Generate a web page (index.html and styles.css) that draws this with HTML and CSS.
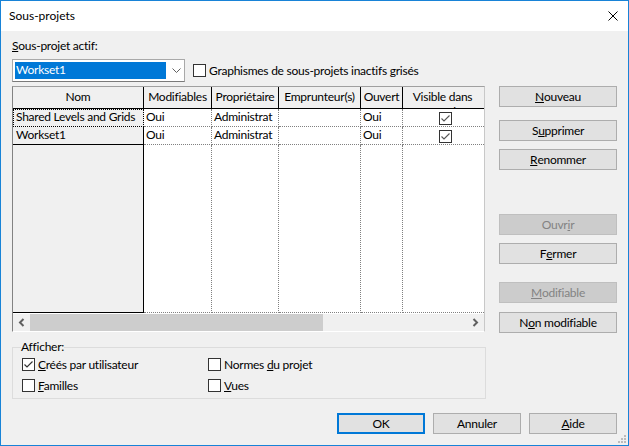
FILE: index.html
```html
<!DOCTYPE html>
<html lang="fr">
<head>
<meta charset="utf-8">
<title>Sous-projets</title>
<link rel="stylesheet" href="styles.css">
</head>
<body>
<div class="window">
  <div class="titlebar">
    <span class="title">Sous-projets</span>
    <svg class="close" width="10" height="10" viewBox="0 0 10 10"><path d="M0.5 0.5 L9.5 9.5 M9.5 0.5 L0.5 9.5" stroke="#000" stroke-width="1" fill="none"/></svg>
  </div>
  <div class="body">
    <div class="label"><u>S</u>ous-projet actif:</div>
    <div class="toprow">
      <div class="combo">
        <span class="combo-sel">Workset1</span>
        <svg class="chev" width="9" height="5" viewBox="0 0 9 5"><path d="M0.5 0.5 L4.5 4.5 L8.5 0.5" stroke="#606060" fill="none"/></svg>
      </div>
      <div class="chk top-chk"><span class="box"></span><span>Graphismes de sous-projets inactifs <u>g</u>risés</span></div>
    </div>
    <div class="main">
      <div class="grid">
        <div class="hrow">
          <div class="hc w-nom">Nom</div>
          <div class="hc w-mod">Modifiables</div>
          <div class="hc w-prop">Propriétaire</div>
          <div class="hc w-emp">Emprunteur(s)</div>
          <div class="hc w-ouv">Ouvert</div>
          <div class="hc w-vis last">Visible dans toutes les vues</div>
        </div>
        <div class="row">
          <div class="nc w-nom focus">Shared Levels and Grids</div>
          <div class="dc w-mod">Oui</div>
          <div class="dc w-prop">Administrat</div>
          <div class="dc w-emp"></div>
          <div class="dc w-ouv">Oui</div>
          <div class="dc w-vis last vis"><span class="box small checked"><svg width="11" height="11" viewBox="0 0 11 11"><path d="M1.5 5.5 L4 8 L9.5 2.5" stroke="#555" stroke-width="1.1" fill="none"/></svg></span></div>
        </div>
        <div class="row">
          <div class="nc w-nom">Workset1</div>
          <div class="dc w-mod">Oui</div>
          <div class="dc w-prop">Administrat</div>
          <div class="dc w-emp"></div>
          <div class="dc w-ouv">Oui</div>
          <div class="dc w-vis last vis"><span class="box small checked"><svg width="11" height="11" viewBox="0 0 11 11"><path d="M1.5 5.5 L4 8 L9.5 2.5" stroke="#555" stroke-width="1.1" fill="none"/></svg></span></div>
        </div>
        <div class="row filler">
          <div class="nc w-nom"></div>
          <div class="dc w-mod"></div>
          <div class="dc w-prop"></div>
          <div class="dc w-emp"></div>
          <div class="dc w-ouv"></div>
          <div class="dc w-vis last"></div>
        </div>
        <div class="gap"></div>
        <div class="hscroll">
          <div class="sbtn"><svg width="17" height="17" viewBox="0 0 17 17"><path d="M10.5 5 L7 8.5 L10.5 12" stroke="#606060" stroke-width="2" fill="none"/></svg></div>
          <div class="thumb"></div>
          <div class="track"></div>
          <div class="sbtn"><svg width="17" height="17" viewBox="0 0 17 17"><path d="M6.5 5 L10 8.5 L6.5 12" stroke="#606060" stroke-width="2" fill="none"/></svg></div>
        </div>
      </div>
      <div class="side">
        <div class="btn b1"><u>N</u>ouveau</div>
        <div class="btn b2">S<u>u</u>pprimer</div>
        <div class="btn b3"><u>R</u>enommer</div>
        <div class="btn b4 disabled">Ouvr<u>i</u>r</div>
        <div class="btn b5">F<u>e</u>rmer</div>
        <div class="btn b6 disabled"><u>M</u>odifiable</div>
        <div class="btn b7">N<u>o</u>n modifiable</div>
      </div>
    </div>
    <fieldset class="group">
      <legend>Afficher:</legend>
      <div class="opts">
        <div class="chk"><span class="box checked"><svg width="11" height="11" viewBox="0 0 11 11"><path d="M1.5 5.5 L4 8 L9.5 2.5" stroke="#333" stroke-width="1.2" fill="none"/></svg></span><span><u>C</u>réés par utilisateur</span></div>
        <div class="chk"><span class="box"></span><span>Normes <u>d</u>u projet</span></div>
        <div class="chk"><span class="box"></span><span><u>F</u>amilles</span></div>
        <div class="chk"><span class="box"></span><span><u>V</u>ues</span></div>
      </div>
    </fieldset>
    <div class="footer">
      <div class="btn fbtn default">OK</div>
      <div class="btn fbtn">Annuler</div>
      <div class="btn fbtn"><u>A</u>ide</div>
    </div>
  </div>
  <svg class="grip" width="10" height="10" viewBox="0 0 10 10">
    <rect x="7" y="1" width="2" height="2" fill="#bcbcbc"/>
    <rect x="4" y="4" width="2" height="2" fill="#bcbcbc"/>
    <rect x="7" y="4" width="2" height="2" fill="#bcbcbc"/>
    <rect x="1" y="7" width="2" height="2" fill="#bcbcbc"/>
    <rect x="4" y="7" width="2" height="2" fill="#bcbcbc"/>
    <rect x="7" y="7" width="2" height="2" fill="#bcbcbc"/>
  </svg>
</div>
</body>
</html>
```

FILE: styles.css
```css
* { box-sizing: border-box; }
html, body { margin: 0; padding: 0; }
body {
  font-family: Lato, "Noto Sans", sans-serif;
  font-size: 12px;
  letter-spacing: -0.25px;
  color: #000;
  background: #fff;
}
u { text-decoration: underline; text-underline-offset: 1px; }

.window {
  width: 629px;
  height: 446px;
  border: 1px solid #1883d7;
  background: #f0f0f0;
  display: flex;
  flex-direction: column;
  position: relative;
  overflow: hidden;
}

.titlebar {
  flex: none;
  height: 30px;
  background: #fff;
  display: flex;
  align-items: center;
  justify-content: space-between;
  padding: 0 10px 0 8px;
}
.title { line-height: 16px; letter-spacing: 0; }
.close { display: block; }

.body {
  flex: 1;
  display: flex;
  flex-direction: column;
  padding: 0 11px;
}

.label { margin-top: 7px; line-height: 16px; height: 16px; }

.toprow {
  margin-top: 5px;
  height: 23px;
  display: flex;
  align-items: center;
}
.combo {
  width: 173px;
  height: 23px;
  border: 1px solid #a9a9a9;
  border-bottom-color: #7a7a7a;
  background: #fff;
  display: flex;
  align-items: center;
  padding-left: 2px;
}
.combo-sel {
  width: 151px;
  height: 17px;
  line-height: 16px;
  background: #0078d7;
  color: #fff;
  padding-left: 1px;
}
.chev { margin-left: 6px; display: block; }

.chk { display: flex; align-items: center; gap: 3px; line-height: 13px; white-space: nowrap; }
.top-chk { margin-left: 8px; }
.box {
  width: 13px;
  height: 13px;
  border: 1px solid #333;
  background: #fff;
  flex: none;
  display: flex;
  align-items: center;
  justify-content: center;
}
.box svg { display: block; }
.box.small { border-color: #333; }

.main {
  margin-top: 4px;
  display: flex;
  gap: 14px;
}

.grid {
  width: 473px;
  height: 246px;
  border-left: 1px solid #828282;
  border-top: 1px solid #a0a0a0;
  border-right: 1px solid #c8c8c8;
  border-bottom: 1px solid #fff;
  background: #fff;
  display: flex;
  flex-direction: column;
  overflow: hidden;
}

.w-nom { width: 131px; flex: none; }
.w-mod { width: 68px; flex: none; }
.w-prop { width: 67px; flex: none; }
.w-emp { width: 82px; flex: none; }
.w-ouv { width: 42px; flex: none; }
.w-vis { flex: 1; }

.hrow {
  display: flex;
  height: 22px;
  flex: none;
  background: #f0f0f0;
  border-bottom: 1px solid #000;
}
.hc {
  border-right: 1px solid #000;
  text-align: center;
  padding-top: 2px;
  line-height: 15px;
  overflow: hidden;
  white-space: nowrap;
}
.hc.last { white-space: normal; border-right: none; padding: 2px 8px 0 6px; }

.row { display: flex; height: 18px; flex: none; }
.row.filler { height: 168px; }
.nc {
  background: #f0f0f0;
  border-right: 1px solid #000;
  border-bottom: 1px solid #000;
  padding-left: 3px;
  line-height: 16px;
  white-space: nowrap;
  overflow: hidden;
}
.nc.focus {
  border-right-color: transparent;
  border-bottom-color: transparent;
  outline: 1px dotted #000;
  outline-offset: -1px;
}
.dc {
  background: #fff;
  border-right: 1px dotted #808080;
  border-bottom: 1px dotted #808080;
  padding-left: 2px;
  line-height: 16px;
  white-space: nowrap;
  overflow: hidden;
}
.dc.last { border-right: none; }
.dc.vis { display: flex; justify-content: center; padding-left: 4px; padding-top: 3px; }

.gap { height: 1px; flex: none; }
.hscroll {
  height: 17px;
  flex: none;
  display: flex;
  background: #f0f0f0;
}
.sbtn { width: 17px; height: 17px; flex: none; }
.sbtn svg { display: block; }
.thumb { width: 293px; flex: none; background: #cdcdcd; }
.track { flex: 1; }

.side { width: 118px; display: flex; flex-direction: column; }
.btn {
  height: 21px;
  background: #e1e1e1;
  border: 1px solid #adadad;
  display: flex;
  align-items: center;
  justify-content: center;
  line-height: 16px;
  white-space: nowrap;
}
.btn.disabled { background: #cccccc; border-color: #bfbfbf; color: #838383; }
.b2 { margin-top: 13px; }
.b3 { margin-top: 8px; }
.b4 { margin-top: 44px; }
.b5 { margin-top: 8px; }
.b6 { margin-top: 18px; }
.b7 { margin-top: 9px; }

.group {
  margin: 7px 0 0 0;
  width: 474px;
  border: 1px solid #dcdcdc;
  padding: 0 0 6px 8px;
  min-width: 0;
}
.group legend {
  padding: 0;
  line-height: 14px;
}
.opts {
  margin-top: 4px;
  margin-left: 1px;
  display: grid;
  grid-template-columns: 186px auto;
  grid-auto-rows: 13px;
  row-gap: 8px;
}

.footer {
  margin-top: 14px;
  display: flex;
  justify-content: flex-end;
  gap: 8px;
}
.fbtn { width: 88px; }
.fbtn.default { border: 2px solid #0078d7; }

.grip { position: absolute; right: 1px; bottom: 1px; display: block; }
```
